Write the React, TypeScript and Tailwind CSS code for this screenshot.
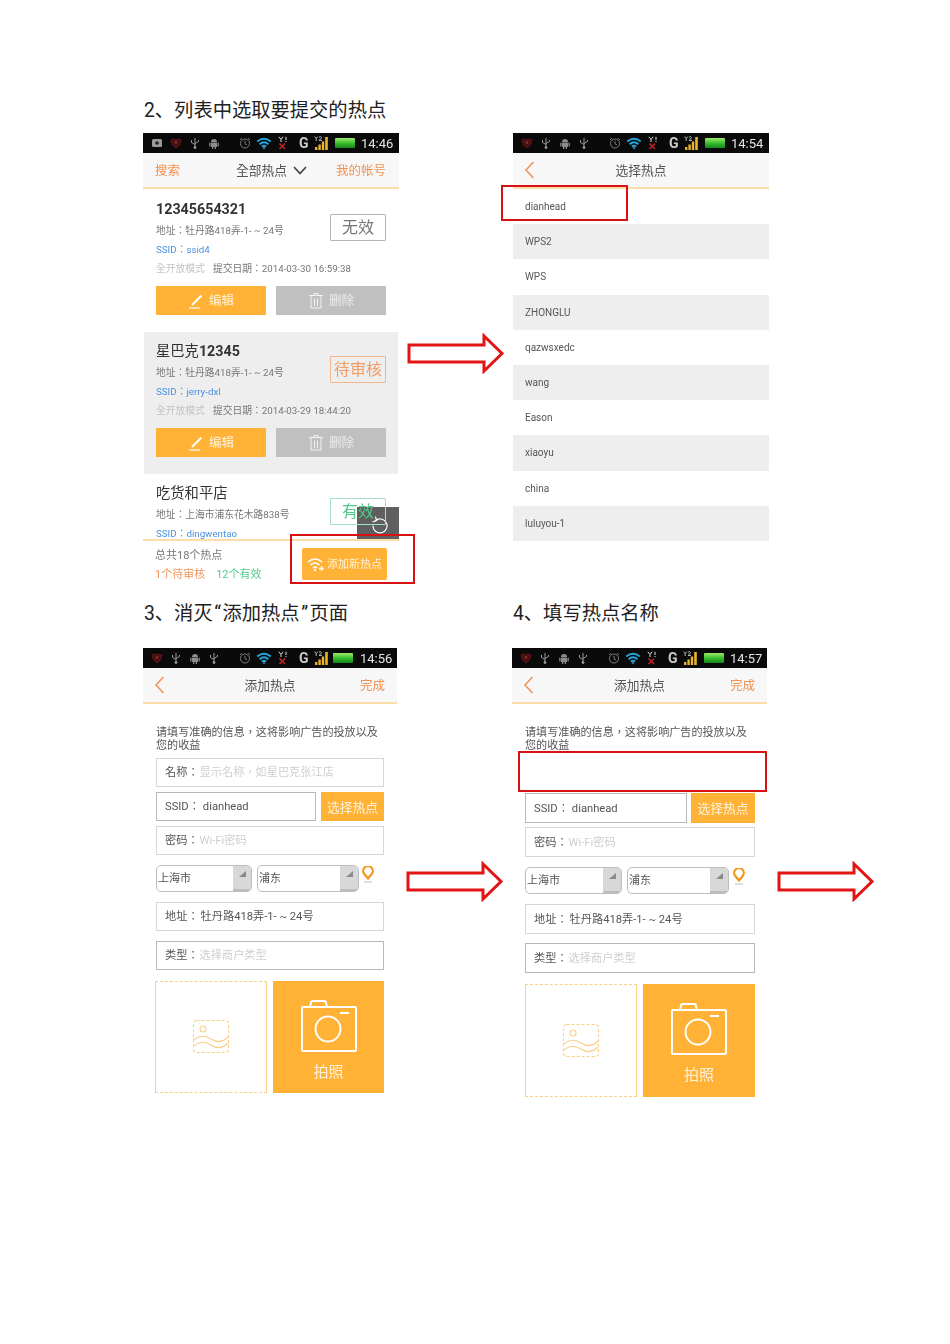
import React from "react";

const PHONE = 'font-["Roboto","Noto_Sans_CJK_TC",sans-serif] blur-[0.4px]';

function NotifIcon() {
  return (
    <svg width="12" height="12" viewBox="0 0 12 12">
      <rect x="1" y="2" width="10" height="8" rx="1.5" fill="#9a9a9a" />
      <path d="M6 4v4M4 6h4" stroke="#222" strokeWidth="1.3" />
    </svg>
  );
}
function ShieldIcon() {
  return (
    <svg width="12" height="12" viewBox="0 0 12 12">
      <path d="M1 3 Q3.5 1 6 3 Q8.5 1 11 3 Q11 8 6 11 Q1 8 1 3Z" fill="#4a0e11" stroke="#5e1619" />
      <circle cx="6" cy="5.5" r="1.4" fill="#7a3434" />
    </svg>
  );
}
function UsbIcon() {
  return (
    <svg width="12" height="12" viewBox="0 0 12 12" fill="none" stroke="#9a9a9a" strokeWidth="1">
      <path d="M6 1v10M2.5 3v2.5L6 7.5M9.5 3v1.5L6 6.5" />
      <circle cx="6" cy="10.5" r="1" fill="#9a9a9a" />
    </svg>
  );
}
function AndroidIcon() {
  return (
    <svg width="12" height="12" viewBox="0 0 12 12" fill="#8c8c8c">
      <path d="M3 5a3 3 0 0 1 6 0z" />
      <rect x="3" y="5.5" width="6" height="4.5" rx="0.6" />
      <rect x="1.2" y="5.5" width="1.3" height="4" rx="0.6" />
      <rect x="9.5" y="5.5" width="1.3" height="4" rx="0.6" />
      <rect x="4" y="10" width="1.3" height="2" />
      <rect x="6.7" y="10" width="1.3" height="2" />
    </svg>
  );
}
function ClockIcon() {
  return (
    <svg width="12" height="12" viewBox="0 0 12 12" fill="none" stroke="#8a8a8a" strokeWidth="0.9">
      <circle cx="6" cy="6.5" r="4.5" />
      <path d="M6 3.8V6.8L8 8M1 3l2-2M11 3L9 1" />
    </svg>
  );
}
function WifiIcon() {
  return (
    <svg width="16" height="13" viewBox="0 0 14 12" fill="none" stroke="#27a6dc" strokeWidth="1.8">
      <path d="M0.8 4.2Q7-.8 13.2 4.2M2.9 6.6Q7 3.2 11.1 6.6M5 8.8Q7 7.3 9 8.8" />
      <path d="M5.6 9.8L7 11.6l1.4-1.8Q7 8.9 5.6 9.8Z" fill="#27a6dc" stroke="none" />
    </svg>
  );
}
function SimXIcon() {
  return (
    <svg width="10" height="14" viewBox="0 0 10 14" fill="none">
      <path d="M0.8 0.8L3 3.4V6M5.2 0.8L3 3.4" stroke="#ddd" strokeWidth="1" />
      <path d="M8 0.8V4M8 5v1" stroke="#ddd" strokeWidth="1" />
      <path d="M1.5 7.5L7 13M7 7.5L1.5 13" stroke="#c22424" strokeWidth="1.6" />
    </svg>
  );
}
function SignalIcon() {
  return (
    <svg width="16" height="14" viewBox="0 0 16 14">
      <path d="M0.6 0.6L2.2 2.6V5M3.8 0.6L2.2 2.6" stroke="#ccc" strokeWidth="0.9" fill="none" />
      <path d="M5 1.2Q7 0 7.5 1.5Q7.5 2.5 5 4.4H8" stroke="#ccc" strokeWidth="0.9" fill="none" />
      <rect x="1" y="11" width="2.4" height="3" fill="#eab42c" />
      <rect x="4.4" y="8.5" width="2.4" height="5.5" fill="#eab42c" />
      <rect x="7.8" y="5.5" width="2.4" height="8.5" fill="#eab42c" />
      <rect x="11.2" y="1" width="2.6" height="13" fill="#eab42c" />
    </svg>
  );
}

function StatusBar({ time, notif, tight }: { time: string; notif?: boolean; tight?: boolean }) {
  const icons = notif
    ? [<NotifIcon key="n" />, <ShieldIcon key="s" />, <UsbIcon key="u" />, <AndroidIcon key="a" />]
    : [<ShieldIcon key="s" />, <UsbIcon key="u" />, <AndroidIcon key="a" />, <UsbIcon key="u2" />];
  return (
    <div className="flex h-5 items-center bg-[#0a0a0a] pl-2">
      <div className="flex gap-[7px]">{icons}</div>
      <div className="ml-[19px]"><ClockIcon /></div>
      <div className="ml-[5px]"><WifiIcon /></div>
      <div className="ml-[6px]"><SimXIcon /></div>
      <span className="ml-[11px] w-[11px] text-[14px] font-bold leading-none text-[#ccc]">G</span>
      <div className="ml-[4px]"><SignalIcon /></div>
      <div className={`${tight ? "ml-[3px]" : "ml-[5px]"} h-[10px] w-5 rounded-[1px] bg-linear-to-b from-[#9be86a] via-[#37c02c] to-[#17851c]`} />
      <span className={`${tight ? "ml-[7px]" : "ml-[6px]"} text-[13px] leading-none text-[#e4e4e4]`}>{time}</span>
    </div>
  );
}

function Back() {
  return (
    <svg width="11" height="18" viewBox="0 0 11 18" fill="none" stroke="#f2955a" strokeWidth="1.6">
      <path d="M9.5 1L2 9l7.5 8" />
    </svg>
  );
}

function Header({ title, done }: { title: string; done?: boolean }) {
  return (
    <div className="relative flex h-[36px] items-center justify-between border-b-2 border-[#fcdda9] bg-[#f7f7f7] pl-[11px] pr-3">
      <Back />
      <span className="absolute inset-x-0 pt-[2px] text-center text-[12.75px] text-[#555]">{title}</span>
      {done && <span className="pt-[2px] text-[12.5px] text-[#f29250]">完成</span>}
    </div>
  );
}

function Pen() {
  return (
    <svg width="16" height="16" viewBox="0 0 16 16" fill="none" stroke="#fff">
      <path d="M4 12L13.5 2.5" strokeWidth="2" />
      <path d="M1 15H12" strokeWidth="1.2" />
    </svg>
  );
}
function Trash() {
  return (
    <svg width="16" height="17" viewBox="0 0 16 17" fill="none" stroke="#f2f2f2" strokeWidth="1">
      <path d="M1 3.5h14M6 3.5V1.5h4v2M3 3.5V16h10V3.5M6.5 6.5V14M9.5 6.5V14" />
    </svg>
  );
}

function SiteCard({
  name, addr, ssid, date, badge, badgeClass, gray, top, clip,
}: {
  name: React.ReactNode; addr: string; ssid: string; date?: string; badge: string; badgeClass: string; gray?: boolean; top: string; clip?: boolean;
}) {
  return (
    <div className={`${gray ? "mx-[1px] bg-[#eeeeee] px-3" : "px-[13px]"} ${top} ${clip ? "relative z-10 h-[65px] overflow-hidden" : "pb-[17px]"}`}>
      <div className="flex justify-between">
        <div className="w-[174px] shrink-0 whitespace-nowrap">
          <div className="h-5 text-[14.3px] leading-[21px] text-[#333]">{name}</div>
          <div className="mt-[2px] h-[19px] text-[9.75px] leading-[19px] text-[#777]">{addr}</div>
          <div className="h-[19px] text-[9.75px] leading-[19px] text-[#4a90e2]">{ssid}</div>
          {date && (
            <div className="flex h-[19px] text-[9.75px] leading-[19px]">
              <span className="w-[57px] shrink-0 text-[#c4c4c4]">全开放模式</span>
              <span className="text-[#777]">提交日期：{date}</span>
            </div>
          )}
        </div>
        <div className={`mt-[15px] flex h-[27px] w-[56px] shrink-0 items-center justify-center rounded-[1px] border text-[16px] ${badgeClass}`}>{badge}</div>
      </div>
      {date && (
        <div className="mt-2 flex gap-[10px]">
          <div className="flex h-[29px] w-[110px] items-center justify-center gap-[5px] bg-[#ffb236] text-[12.5px] text-[#fff3dc]">
            <Pen /><span className="pt-[2px]">编辑</span>
          </div>
          <div className="flex h-[29px] w-[110px] items-center justify-center gap-[5px] bg-[#c0c0c0] text-[12.5px] text-[#ececec]">
            <Trash /><span className="pt-[2px]">删除</span>
          </div>
        </div>
      )}
    </div>
  );
}

function WifiPlus() {
  return (
    <svg width="18" height="15" viewBox="0 0 18 15" fill="none" stroke="#fff" strokeWidth="1.5">
      <path d="M1 5Q8-1 15 5M3.5 8Q8 4 12.5 8M6 10.8Q8 9.2 10 10.8" />
      <circle cx="8" cy="13" r="1.2" fill="#fff" stroke="none" />
      <path d="M14.5 9v5M12 11.5h5" />
    </svg>
  );
}

function ListPhone() {
  const rows = ["dianhead", "WPS2", "WPS", "ZHONGLU", "qazwsxedc", "wang", "Eason", "xiaoyu", "china", "luluyou-1"];
  return (
    <div className={`w-[256px] ${PHONE}`}>
      <StatusBar time="14:54" />
      <Header title="选择热点" />
      {rows.map((r, i) => (
        <div key={r} className={`flex h-[35.2px] items-center pl-3 text-[10px] text-[#555] ${i % 2 ? "bg-[#eeeeee]" : "bg-white"}`}>{r}</div>
      ))}
    </div>
  );
}

function Field({ label, value, placeholder, cls, dark, valueCls = "ml-[2px]" }: { label: string; value?: string; placeholder?: string; cls: string; dark?: boolean; valueCls?: string }) {
  return (
    <div className={`flex items-center border bg-white pl-2 pt-[2px] text-[11.2px] ${dark ? "border-[#b8b8b8]" : "border-[#d6d6d6]"} ${cls}`}>
      <span className="text-[#555]">{label}</span>
      {value && <span className={`text-[#555] ${valueCls}`}>{value}</span>}
      {placeholder && <span className="ml-px text-[#cfcfcf]">{placeholder}</span>}
    </div>
  );
}

function SelectBox({ text, cls }: { text: string; cls: string }) {
  return (
    <div className={`flex h-[27px] items-stretch overflow-hidden rounded-[5px] border border-[#bdbdbd] bg-white text-[11px] text-[#555] ${cls}`}>
      <span className="flex-1 self-center pl-[1px] pt-[2px]">{text}</span>
      <div className="flex w-[18px] justify-end border-b-2 border-[#bdbdbd] bg-[#d8d8d8] pr-[5px] pt-[5px]">
        <svg width="7" height="6" viewBox="0 0 7 6"><path d="M0 6L7 0V6Z" fill="#8a8a8a" /></svg>
      </div>
    </div>
  );
}

function Pin() {
  return (
    <svg width="12" height="17" viewBox="0 0 12 17" fill="none">
      <path d="M6 12.5L2.3 8a4.8 4.8 0 1 1 7.4 0z" stroke="#f2971a" strokeWidth="2.2" fill="#fff" />
      <path d="M2 16h8" stroke="#ccc" strokeWidth="1.2" />
    </svg>
  );
}

function ImageHolder() {
  return (
    <svg width="38" height="36" viewBox="0 0 38 36" fill="none" stroke="#fbcf88" strokeWidth="1.1">
      <rect x="1.5" y="1.5" width="35" height="32" rx="3" strokeDasharray="3 2" />
      <circle cx="11" cy="10" r="3" />
      <path d="M2 21Q10 14 19 20T36 18M2 27Q10 20 19 26T36 24" />
    </svg>
  );
}

function Camera() {
  return (
    <svg width="56" height="54" viewBox="0 0 56 54" fill="none" stroke="#fff" strokeWidth="2">
      <path d="M2 7h52a1 1 0 0 1 1 1V50a1 1 0 0 1-1 1H2a1 1 0 0 1-1-1V8a1 1 0 0 1 1-1Z" />
      <path d="M9 7l1-4a2 2 0 0 1 2-2h11a2 2 0 0 1 2 2l1 4" />
      <circle cx="27" cy="29" r="12.5" />
      <path d="M39 13h9" />
    </svg>
  );
}

function Photos({ cls, left, right }: { cls: string; left: string; right: string }) {
  return (
    <div className={`flex justify-between ${cls}`}>
      <div className={`flex items-center justify-center border border-dashed border-[#fbcf88] [border-left-style:solid] [border-right-style:solid] ${left}`}>
        <ImageHolder />
      </div>
      <div className={`flex flex-col items-center bg-[#ffb236] pt-[19px] ${right}`}>
        <Camera />
        <span className="mt-[9px] text-[15px] leading-[18px] text-[#fff3dc]">拍照</span>
      </div>
    </div>
  );
}

function FormPhoneA() {
  return (
    <div className={`w-[254px] ${PHONE}`}>
      <StatusBar time="14:56" tight />
      <Header title="添加热点" done />
      <div className="pl-[13px] pr-[13px] pt-[22px]">
        <p className="h-[26px] text-[11.1px] leading-[13px] text-[#555]">请填写准确的信息，这将影响广告的投放以及您的收益</p>
        <Field cls="mt-[6px] h-[29px]" label="名称：" placeholder="显示名称，如星巴克张江店" />
        <div className="mt-[5px] flex justify-between">
          <Field dark cls="h-[29px] w-[160px]" label="SSID：" value="dianhead" valueCls="ml-[3px]" />
          <div className="flex h-[29px] w-[63px] items-center justify-center bg-[#ffb236] pt-[2px] text-[12.75px] text-[#fff3dc]">选择热点</div>
        </div>
        <Field cls="mt-[5px] h-[29px]" label="密码：" placeholder="Wi-Fi密码" />
        <div className="mt-[10px] flex items-start gap-[5px]">
          <SelectBox cls="w-[96px]" text="上海市" />
          <SelectBox cls="w-[102px]" text="浦东" />
          <div className="-ml-[2px] mt-px"><Pin /></div>
        </div>
        <Field cls="mt-[10px] h-[29px]" label="地址：" value="牡丹路418弄-1- ~ 24号" />
        <Field dark cls="mt-[10px] h-[29px]" label="类型：" placeholder="选择商户类型" />
        <Photos cls="-ml-px mt-[11px]" left="h-[112px] w-[112px]" right="h-[112px] w-[111px]" />
      </div>
    </div>
  );
}

function FormPhoneB() {
  return (
    <div className={`w-[255px] ${PHONE}`}>
      <StatusBar time="14:57" />
      <Header title="添加热点" done />
      <div className="pl-[13px] pr-[12px] pt-[22px]">
        <p className="h-[26px] text-[11.1px] leading-[13px] text-[#555]">请填写准确的信息，这将影响广告的投放以及您的收益</p>
        <div className="mt-[7px] h-[30px]" />
        <div className="mt-[4px] flex justify-between">
          <Field dark cls="h-[30px] w-[162px]" label="SSID：" value="dianhead" valueCls="ml-[3px]" />
          <div className="flex h-[30px] w-[64px] items-center justify-center bg-[#ffb236] pt-[2px] text-[12.75px] text-[#fff3dc]">选择热点</div>
        </div>
        <Field cls="mt-[4px] h-[30px]" label="密码：" placeholder="Wi-Fi密码" />
        <div className="mt-[10px] flex items-start gap-[5px]">
          <SelectBox cls="w-[97px]" text="上海市" />
          <SelectBox cls="w-[102px]" text="浦东" />
          <div className="-ml-px mt-px"><Pin /></div>
        </div>
        <Field cls="mt-[10px] h-[30px]" label="地址：" value="牡丹路418弄-1- ~ 24号" />
        <Field dark cls="mt-[9px] h-[30px]" label="类型：" placeholder="选择商户类型" />
        <Photos cls="mt-[11px]" left="h-[113px] w-[112px]" right="h-[113px] w-[112px]" />
      </div>
    </div>
  );
}

function MainPhone() {
  return (
    <div className={`relative h-[457px] w-[256px] ${PHONE}`}>
      <StatusBar time="14:46" notif />
      <div className="flex h-[36px] items-center border-b-2 border-[#fcdda9] bg-[#f7f7f7] pl-3 pr-[13px] text-[12.5px]">
        <span className="pt-[2px] text-[#f29250]">搜索</span>
        <span className="ml-[56px] pt-[2px] text-[12.75px] text-[#555]">全部热点</span>
        <svg className="ml-[6px]" width="14" height="9" viewBox="0 0 14 9" fill="none" stroke="#444" strokeWidth="1.7">
          <path d="M1 1l6 6.5L13 1" />
        </svg>
        <span className="ml-auto pt-[2px] text-[#f29250]">我的帐号</span>
      </div>
      <SiteCard top="pt-[10px]" name={<b className="font-bold">12345654321</b>} addr="地址：牡丹路418弄-1- ~ 24号" ssid="SSID：ssid4" date="2014-03-30 16:59:38" badge="无效" badgeClass="border-[#b5b5b5] bg-white text-[#777]" />
      <SiteCard top="pt-[9px]" gray name={<>星巴克<b className="font-bold">12345</b></>} addr="地址：牡丹路418弄-1- ~ 24号" ssid="SSID：jerry-dxl" date="2014-03-29 18:44:20" badge="待审核" badgeClass="border-[#f3b68a] text-[#f29b62]" />
      <SiteCard top="pt-[9px]" clip name="吃货和平店" addr="地址：上海市浦东花木路838号" ssid="SSID：dingwentao" badge="有效" badgeClass="border-[#a6e2c2] text-[#53c98b]" />
      <div className="flex justify-between border-t-2 border-[#fcdda9] pl-3 pr-3">
        <div className="pt-[5px] text-[11px] leading-[19px]">
          <div className="text-[#777]">总共18个热点</div>
          <div className="flex gap-[11px]">
            <span className="text-[#f2955a]">1个待审核</span>
            <span className="text-[#54cc8e]">12个有效</span>
          </div>
        </div>
        <div className="mt-[7px] flex h-[32px] w-[85px] items-center justify-center gap-[2px] rounded-[2px] bg-[#ffb236] text-[11px] text-[#fff3dc]">
          <WifiPlus /><span className="pt-[2px]">添加新热点</span>
        </div>
      </div>
      <div className="absolute right-0 top-[374px] flex h-[32px] w-[42px] items-end justify-center bg-[#5f5f5f] pb-[5px] pl-[4px]">
        <svg width="18" height="18" viewBox="0 0 18 18" fill="none" stroke="#fff" strokeWidth="1.2">
          <path d="M4 5A7 7 0 1 1 2 9.5" />
          <path d="M1 5h4.5V1" transform="rotate(-20 4 4)" />
        </svg>
      </div>
    </div>
  );
}

function Arrow({ cls }: { cls: string }) {
  return (
    <svg className={`absolute ${cls}`} width="98" height="41" viewBox="0 0 98 41" fill="#fff" stroke="#e21414" strokeWidth="3">
      <polygon points="2,12 77,12 77,3 95,20.5 77,38 77,29 2,29" />
    </svg>
  );
}

const H2 = 'h-[26px] pl-px pt-[2px] text-[19.3px] leading-6 text-[#222] font-["Roboto","Noto_Sans_CJK_SC",sans-serif]';

export default function App() {
  return (
    <div className='relative h-[1344px] w-[950px] overflow-hidden bg-white font-["Roboto","Noto_Sans_CJK_SC",sans-serif]'>
      <div className="pl-[143px] pt-[97px]">
        <div className="grid grid-cols-[256px_256px] gap-x-[114px]">
          <h2 className={`mb-[10px] ${H2}`}>2、列表中选取要提交的热点</h2>
          <div />
          <MainPhone />
          <ListPhone />
        </div>
        <div className="mt-[10px] grid grid-cols-[254px_255px] gap-x-[115px]">
          <h2 className={`mb-[22px] ${H2}`}>3、消灭<span className="mx-[1.5px]">“</span>添加热点<span className="mx-[1.5px]">”</span>页面</h2>
          <h2 className={`mb-[22px] ${H2}`}>4、填写热点名称</h2>
          <FormPhoneA />
          <FormPhoneB />
        </div>
      </div>

      <div className="absolute left-[501px] top-[185px] h-[36px] w-[127px] border-2 border-[#d81212]" />
      <div className="absolute left-[290px] top-[534px] h-[50px] w-[125px] border-2 border-[#d81212]" />
      <div className="absolute left-[518px] top-[751px] h-[41px] w-[249px] border-2 border-[#d81212] bg-white" />
      <Arrow cls="left-[407px] top-[333px]" />
      <Arrow cls="left-[406px] top-[861px]" />
      <Arrow cls="left-[777px] top-[861px]" />
    </div>
  );
}
